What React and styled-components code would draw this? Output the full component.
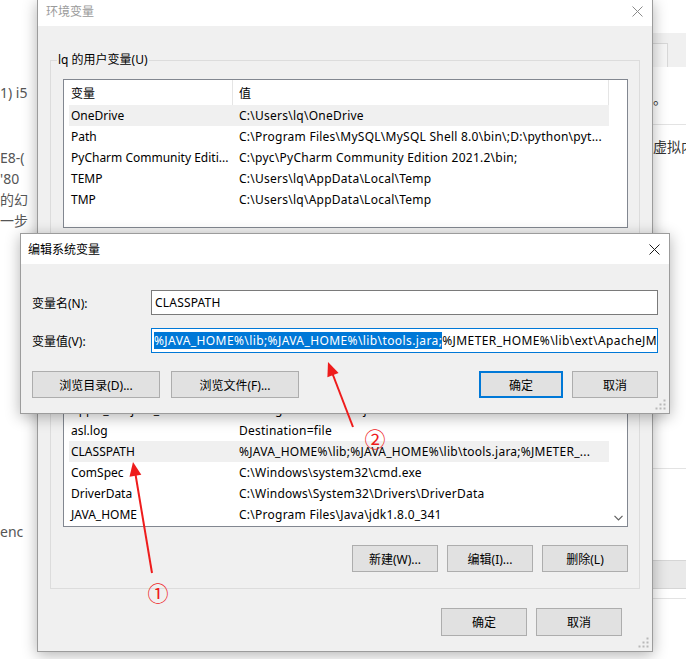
import React from 'react';
import styled, { createGlobalStyle } from 'styled-components';

const UI_FONT = `"Segoe UI", "Noto Sans", "Noto Sans CJK SC", sans-serif`;

const GlobalStyles = createGlobalStyle`
  html, body {
    margin: 0;
    padding: 0;
    background: #fff;
  }
  body {
    font-family: ${UI_FONT};
    font-size: 12px;
    color: #000;
  }
  * {
    box-sizing: border-box;
  }
`;

const Desktop = styled.div`
  position: relative;
  width: 686px;
  height: 659px;
  overflow: hidden;
  background: #fff;
`;

/* the blog page that peeks out behind the windows */
const BgPage = styled.div`
  display: flex;
  justify-content: space-between;
  height: 100%;
`;

const LeftStrip = styled.div`
  width: 37px;
  overflow: hidden;
  display: flex;
  flex-direction: column;
  color: #555;
  font-size: 14px;
  font-family: "Noto Sans", "Noto Sans CJK SC", sans-serif;
`;

const BgLine = styled.div`
  margin-top: ${p => p.$gap || 0}px;
  line-height: 21px;
  white-space: nowrap;
`;

const RightStrip = styled.div`
  width: 33px;
  display: flex;
  flex-direction: column;
  font-size: 14px;
  color: #333;
  font-family: "Noto Sans CJK SC", sans-serif;
`;

const StripBand = styled.div`
  margin-top: ${p => p.$gap}px;
  height: ${p => p.$h}px;
  background: ${p => p.$bg};
  border-top: ${p => (p.$edged ? '1px solid #d6d6d6' : 'none')};
  border-bottom: ${p => (p.$edged ? '1px solid #d6d6d6' : 'none')};
`;

const StripTab = styled.div`
  width: 15px;
  height: 24px;
  margin-top: 10px;
  background: #f6f6f6;
  border-top: 1px solid #d8d8d8;
  border-right: 1px solid #d8d8d8;
`;

const StripRule = styled.div`
  margin-top: ${p => p.$gap}px;
  height: 1px;
  background: #e3e3e3;
`;

/* windows */
const Window = styled.div`
  position: absolute;
  display: flex;
  flex-direction: column;
  background: #f0f0f0;
  border: 1px solid #9c9c9c;
  box-shadow: 0 3px 14px rgba(0, 0, 0, 0.3);
`;

const MainWindow = styled(Window)`
  left: 37px;
  top: 0;
  width: 616px;
  height: 652px;
  border-top: none;
`;

const EditWindow = styled(Window)`
  left: 20px;
  top: 233px;
  width: 650px;
  height: 181px;
  z-index: 2;
`;

const TitleBar = styled.div`
  height: ${p => p.$h}px;
  flex: none;
  background: #fff;
  display: flex;
  align-items: center;
  justify-content: space-between;
  padding: 0 9px ${p => p.$lift}px ${p => p.$indent}px;
  color: ${p => (p.$inactive ? '#9a9a9a' : '#000')};
  font-size: 12px;
`;

const CloseGlyph = ({ color }) => (
  <svg width="11" height="11" viewBox="0 0 11 11">
    <path d="M0.5 0.5 L10.5 10.5 M10.5 0.5 L0.5 10.5" stroke={color} strokeWidth="1" />
  </svg>
);

const MainBody = styled.div`
  flex: 1;
  display: flex;
  flex-direction: column;
  padding: 0 12px;
`;

const Group = styled.fieldset`
  margin: ${p => p.$gap}px 0 0;
  padding: 11px 11px ${p => p.$bottom}px 12px;
  border: 1px solid #dcdcdc;
  min-width: 0;

  & > legend {
    margin-left: -6px;
    padding: 0 1px;
    line-height: 16px;
    font-size: 12px;
  }
`;

const ListBox = styled.div`
  height: ${p => p.$h}px;
  border: 1px solid #828790;
  background: #fff;
  display: flex;
  overflow: hidden;
`;

const ListMain = styled.div`
  width: 545px;
  padding-left: 5px;
  display: flex;
  flex-direction: column;
  overflow: hidden;
`;

const ListGrid = styled.div`
  display: grid;
  grid-template-columns: 163px 1fr;
  flex: none;
  white-space: nowrap;
`;

const HeaderRow = styled(ListGrid)`
  height: 25px;
  align-items: center;
  border-right: 1px solid #e5e5e5;

  & > span + span {
    border-left: 1px solid #e5e5e5;
    padding-left: 6px;
    height: 100%;
    display: flex;
    align-items: center;
  }
  & > span:first-child {
    padding-left: 2px;
  }
`;

const Row = styled(ListGrid)`
  height: 21px;
  align-items: center;
  background: ${p => (p.$selected ? '#f0f0f0' : 'transparent')};

  & > span {
    overflow: hidden;
  }
  & > span:first-child {
    padding-left: 2px;
  }
  & > span + span {
    padding-left: 7px;
    letter-spacing: 0.25px;
  }
`;

const ScrollRail = styled.div`
  flex: 1;
  display: flex;
  flex-direction: column;
  justify-content: flex-end;
  align-items: center;
  padding-bottom: 5px;
`;

const ButtonRow = styled.div`
  display: flex;
  justify-content: ${p => p.$justify || 'flex-end'};
  gap: ${p => p.$gap}px;
  margin-top: ${p => p.$top}px;
  margin-left: ${p => (p.$push ? 'auto' : '0')};
  padding-right: ${p => p.$right || 0}px;
`;

const Button = styled.div`
  width: ${p => p.$w}px;
  height: ${p => p.$h || 27}px;
  flex: none;
  display: flex;
  align-items: center;
  justify-content: center;
  background: #e1e1e1;
  border: 1px solid ${p => (p.$default ? '#0078d7' : '#adadad')};
  box-shadow: ${p => (p.$default ? 'inset 0 0 0 1px #0078d7' : 'none')};
  font-size: 12px;
  white-space: nowrap;
`;

const Grip = styled.svg`
  position: absolute;
  right: 3px;
  bottom: 3px;
`;

const GripDots = () => (
  <Grip width="11" height="11" viewBox="0 0 11 11">
    {[
      [8, 0], [8, 4], [4, 4], [8, 8], [4, 8], [0, 8],
    ].map(([x, y]) => (
      <rect key={`${x}-${y}`} x={x + 0.5} y={y + 0.5} width="2" height="2" fill="#b8b8b8" />
    ))}
  </Grip>
);

/* edit dialog */
const EditBody = styled.div`
  flex: 1;
  padding: 26px 11px 0 11px;
  display: flex;
  flex-direction: column;
`;

const FieldRow = styled.div`
  display: grid;
  grid-template-columns: 119px 1fr;
  align-items: center;
  margin-top: ${p => p.$gap || 0}px;
`;

const Input = styled.div`
  height: 25px;
  background: #fff;
  border: 1px solid ${p => (p.$focused ? '#0078d7' : '#7a7a7a')};
  padding-left: ${p => (p.$focused ? 2 : 3)}px;
  display: flex;
  align-items: center;
  white-space: nowrap;
  overflow: hidden;
  font-size: 12px;
  letter-spacing: ${p => (p.$focused ? 0.4 : 0.2)}px;
`;

const Selection = styled.span`
  background: #0078d7;
  color: #fff;
  line-height: 17px;
`;

const Annotations = styled.svg`
  position: absolute;
  left: 0;
  top: 0;
  z-index: 5;
  pointer-events: none;
`;

const Marker = styled.span`
  position: absolute;
  z-index: 6;
  color: #ee1c1c;
  font-family: "Noto Sans CJK SC", sans-serif;
  font-size: 21px;
  line-height: 1;
  transform: translate(-50%, -50%);
`;

const userVars = [
  ['OneDrive', 'C:\\Users\\lq\\OneDrive', true],
  ['Path', 'C:\\Program Files\\MySQL\\MySQL Shell 8.0\\bin\\;D:\\python\\pyt...'],
  ['PyCharm Community Editi...', 'C:\\pyc\\PyCharm Community Edition 2021.2\\bin;'],
  ['TEMP', 'C:\\Users\\lq\\AppData\\Local\\Temp'],
  ['TMP', 'C:\\Users\\lq\\AppData\\Local\\Temp'],
];

const systemVars = [
  ['ACSetupSvcPort', '23210'],
  ['ACSvcPort', '17532'],
  ['ANT_HOME', 'D:\\apache-ant-1.10.12'],
  ['Apple_Bonjour_SDK', 'C:\\Program Files\\Bonjour SDK\\'],
  ['asl.log', 'Destination=file'],
  ['CLASSPATH', '%JAVA_HOME%\\lib;%JAVA_HOME%\\lib\\tools.jara;%JMETER_...', true],
  ['ComSpec', 'C:\\Windows\\system32\\cmd.exe'],
  ['DriverData', 'C:\\Windows\\System32\\Drivers\\DriverData'],
  ['JAVA_HOME', 'C:\\Program Files\\Java\\jdk1.8.0_341'],
];

const VarList = ({ height, rows, scroll }) => (
  <ListBox $h={height}>
    <ListMain>
      <HeaderRow>
        <span>变量</span>
        <span>值</span>
      </HeaderRow>
      {rows.map(([name, value, selected]) => (
        <Row key={name} $selected={selected}>
          <span>{name}</span>
          <span>{value}</span>
        </Row>
      ))}
    </ListMain>
    <ScrollRail>
      {scroll && (
        <svg width="9" height="6" viewBox="0 0 9 6">
          <path d="M0.5 0.8 L4.5 4.8 L8.5 0.8" stroke="#606060" strokeWidth="1.2" fill="none" />
        </svg>
      )}
    </ScrollRail>
  </ListBox>
);

const App = () => (
  <>
    <GlobalStyles />
    <Desktop>
      <BgPage>
        <LeftStrip>
          <BgLine $gap={82}>1) i5</BgLine>
          <BgLine $gap={44}>E8-(</BgLine>
          <BgLine>'80</BgLine>
          <BgLine>的幻</BgLine>
          <BgLine>一步</BgLine>
          <BgLine $gap={290}>enc</BgLine>
        </LeftStrip>
        <RightStrip>
          <StripBand $gap={33} $h={34} $bg="#f0f0f0">
            <StripTab />
          </StripBand>
          <BgLine $gap={21}>。</BgLine>
          <StripRule $gap={15} />
          <BgLine $gap={11}>虚拟内</BgLine>
          <StripRule $gap={311} />
          <StripBand $gap={91} $h={29} $bg="#e9e9e9" $edged />
          <StripRule $gap={9} />
        </RightStrip>
      </BgPage>

      <MainWindow>
        <TitleBar $h={26} $lift={4} $indent={8} $inactive>
          <span>环境变量</span>
          <CloseGlyph color="#8a8a8a" />
        </TitleBar>
        <MainBody>
          <Group $gap={26} $bottom={6}>
            <legend>lq 的用户变量(U)</legend>
            <VarList height={149} rows={userVars} />
            <ButtonRow $gap={9} $top={18}>
              <Button $w={86}>新建(N)...</Button>
              <Button $w={86}>编辑(E)...</Button>
              <Button $w={86}>删除(D)</Button>
            </ButtonRow>
          </Group>
          <Group $gap={3} $bottom={16}>
            <legend>系统变量(S)</legend>
            <VarList height={217} rows={systemVars} scroll />
            <ButtonRow $gap={9} $top={18}>
              <Button $w={86}>新建(W)...</Button>
              <Button $w={86}>编辑(I)...</Button>
              <Button $w={86}>删除(L)</Button>
            </ButtonRow>
          </Group>
          <ButtonRow $gap={9} $top={19} $right={18}>
            <Button $w={86} $h={28}>确定</Button>
            <Button $w={86} $h={28}>取消</Button>
          </ButtonRow>
        </MainBody>
        <GripDots />
      </MainWindow>

      <EditWindow>
        <TitleBar $h={30} $lift={0} $indent={7}>
          <span>编辑系统变量</span>
          <CloseGlyph color="#1a1a1a" />
        </TitleBar>
        <EditBody>
          <FieldRow>
            <span>变量名(N):</span>
            <Input>CLASSPATH</Input>
          </FieldRow>
          <FieldRow $gap={13}>
            <span>变量值(V):</span>
            <Input $focused>
              <Selection>%JAVA_HOME%\lib;%JAVA_HOME%\lib\tools.jara;</Selection>
              %JMETER_HOME%\lib\ext\ApacheJMeter_core.jar
            </Input>
          </FieldRow>
          <ButtonRow $gap={11} $top={18} $justify="flex-start">
            <Button $w={128}>浏览目录(D)...</Button>
            <Button $w={128}>浏览文件(F)...</Button>
            <ButtonRow $gap={9} $top={0} $push>
              <Button $w={84} $default>确定</Button>
              <Button $w={86}>取消</Button>
            </ButtonRow>
          </ButtonRow>
        </EditBody>
        <GripDots />
      </EditWindow>

      <Annotations width="686" height="659" viewBox="0 0 686 659">
        <line x1="152" y1="573" x2="135.6" y2="475" stroke="#ee1c1c" strokeWidth="2" />
        <polygon points="133,462 129.5,476.8 141.3,474.8" fill="#ee1c1c" />
        <line x1="353" y1="427" x2="332.6" y2="374" stroke="#ee1c1c" strokeWidth="2" />
        <polygon points="328,362 327.4,377.2 338.6,372.9" fill="#ee1c1c" />
      </Annotations>
      <Marker style={{ left: 158, top: 592 }}>①</Marker>
      <Marker style={{ left: 375, top: 438 }}>②</Marker>
    </Desktop>
  </>
);

export default App;
